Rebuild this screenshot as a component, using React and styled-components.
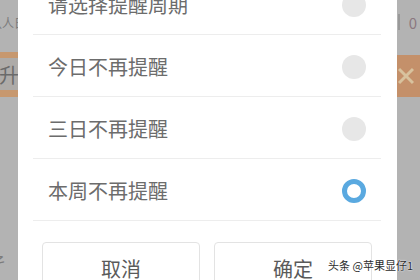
import React, { useState } from "react";
import styled, { createGlobalStyle } from "styled-components";

const options = ["请选择提醒周期", "今日不再提醒", "三日不再提醒", "本周不再提醒"];

export default function App() {
  const [picked, setPicked] = useState(3);

  return (
    <>
      <GlobalStyle />
      <Screen>
        <Backdrop>
          <TopRow>
            <FadedText>认人日</FadedText>
            <Counter>
              <Bar />
              <span>0</span>
            </Counter>
          </TopRow>
          <Banner>
            <BannerLabel>升</BannerLabel>
            <CloseBox>
              <svg width="16" height="20" viewBox="0 0 16 20">
                <path d="M1 3 L15 17 M15 3 L1 17" stroke="#d8c29e" strokeWidth="3" fill="none" />
              </svg>
            </CloseBox>
          </Banner>
          <BottomRow>
            <FadedText $size="15px">孑</FadedText>
          </BottomRow>
        </Backdrop>

        <Dialog>
          {options.map((label, i) => (
            <Option key={label} onClick={() => setPicked(i)}>
              <span>{label}</span>
              <Radio $on={picked === i} />
            </Option>
          ))}
          <Actions>
            <ActionButton>取消</ActionButton>
            <ActionButton>确定</ActionButton>
          </Actions>
        </Dialog>

        <Watermark>头条 @苹果显仔1</Watermark>
      </Screen>
    </>
  );
}

const GlobalStyle = createGlobalStyle`
  html, body {
    margin: 0;
    padding: 0;
    background: #b3b3b3;
    font-family: "Noto Sans CJK SC", "Noto Sans", sans-serif;
  }
`;

const Screen = styled.div`
  position: relative;
  width: 420px;
  height: 280px;
  overflow: hidden;
  background: #b3b3b3;
`;

/* page content dimmed behind the dialog */
const Backdrop = styled.div`
  display: flex;
  flex-direction: column;
  height: 100%;
  padding-top: 11px;
  box-sizing: border-box;
`;

const TopRow = styled.div`
  display: flex;
  justify-content: space-between;
  align-items: center;
  height: 22px;
`;

const FadedText = styled.span`
  font-size: ${(p) => p.$size || "12px"};
  color: #7c7c7c;
  margin-left: -10px;
  white-space: nowrap;
`;

const Counter = styled.div`
  display: flex;
  align-items: center;
  gap: 9px;
  padding-right: 3px;
  font-size: 15px;
  color: #8b7880;
`;

const Bar = styled.i`
  display: block;
  width: 2px;
  height: 16px;
  background: #999;
`;

const Banner = styled.div`
  display: flex;
  justify-content: space-between;
  align-items: stretch;
  margin-top: 19px;
  height: 45px;
`;

const BannerLabel = styled.div`
  width: 18px;
  box-sizing: border-box;
  display: flex;
  align-items: center;
  justify-content: center;
  border-top: 6px solid #c7986f;
  border-bottom: 7px solid #c7986f;
  background: #aeaba8;
  font-size: 20px;
  color: #6a6a6a;
`;

const CloseBox = styled.div`
  width: 23px;
  margin-top: 3px;
  display: flex;
  align-items: center;
  padding-left: 1px;
  box-sizing: border-box;
  background: #c4906a;
`;

const BottomRow = styled.div`
  margin-top: auto;
  padding-bottom: 7px;
`;

const Dialog = styled.div`
  position: absolute;
  left: 18px;
  top: -27px;
  width: 379px;
  height: 340px;
  padding: 0 16px 0 15px;
  box-sizing: border-box;
  background: #fff;
`;

const Option = styled.div`
  display: flex;
  align-items: center;
  justify-content: space-between;
  height: 62px;
  padding: 2px 15px 0;
  box-sizing: border-box;
  border-bottom: 1px solid #ededed;
  font-size: 20px;
  color: #6c6c6c;
  cursor: pointer;
`;

const Radio = styled.i`
  display: block;
  width: 24px;
  height: 24px;
  border-radius: 50%;
  box-sizing: border-box;
  background: ${(p) => (p.$on ? "#fff" : "#e7e7e7")};
  border: ${(p) => (p.$on ? "5px solid #5aa9e0" : "none")};
`;

const Actions = styled.div`
  display: grid;
  grid-template-columns: 158px 158px;
  gap: 14px;
  padding: 21px 0 0 9px;
`;

const ActionButton = styled.button`
  height: 52px;
  border: 1px solid #e3e3e3;
  border-radius: 4px;
  background: #fff;
  font-family: inherit;
  font-size: 20px;
  color: #5a5a5a;
  padding: 0;
`;

const Watermark = styled.div`
  position: absolute;
  right: 7px;
  bottom: 7px;
  font-size: 11px;
  color: #2b2b2b;
  text-shadow: 0 0 2px #fff, 0 0 1px #fff;
  white-space: nowrap;
`;
